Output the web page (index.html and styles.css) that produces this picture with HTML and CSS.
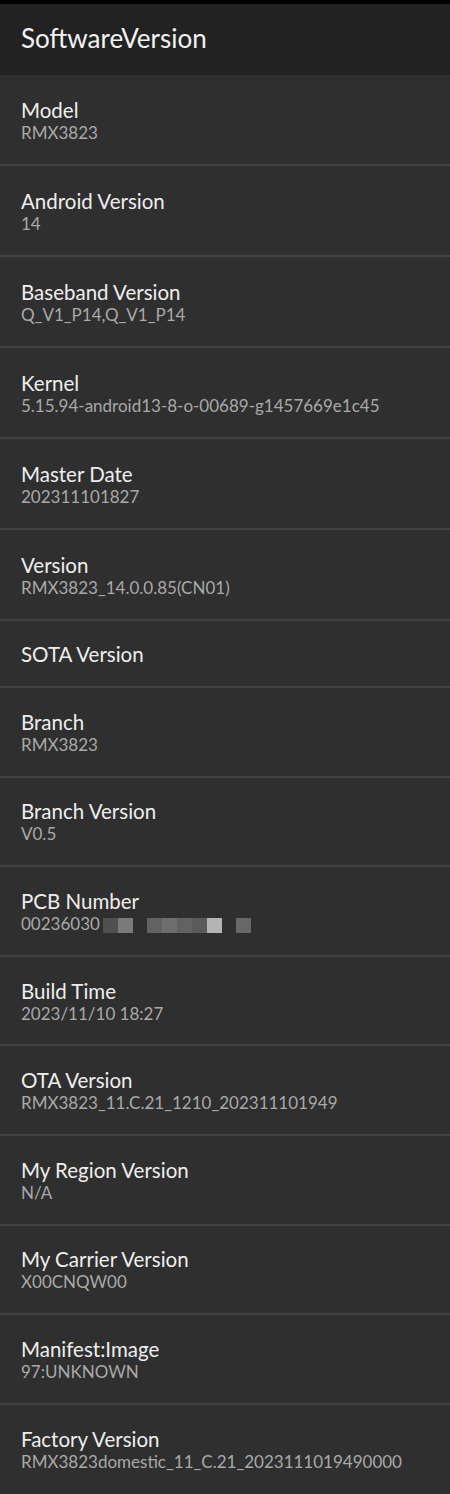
FILE: index.html
```html
<!DOCTYPE html>
<html>
<head>
<meta charset="utf-8">
<link rel="stylesheet" href="styles.css">
</head>
<body>
<div class="status"></div>
<header class="appbar"><h1 class="title">SoftwareVersion</h1></header>
<main class="list">
  <div class="row tall"><div class="label">Model</div><div class="value">RMX3823</div></div>
  <div class="row tall"><div class="label">Android Version</div><div class="value">14</div></div>
  <div class="row tall"><div class="label">Baseband Version</div><div class="value">Q_V1_P14,Q_V1_P14</div></div>
  <div class="row tall"><div class="label">Kernel</div><div class="value">5.15.94-android13-8-o-00689-g1457669e1c45</div></div>
  <div class="row tall"><div class="label">Master Date</div><div class="value">202311101827</div></div>
  <div class="row tall"><div class="label">Version</div><div class="value">RMX3823_14.0.0.85(CN01)</div></div>
  <div class="row single"><div class="label">SOTA Version</div></div>
  <div class="row"><div class="label">Branch</div><div class="value">RMX3823</div></div>
  <div class="row"><div class="label">Branch Version</div><div class="value">V0.5</div></div>
  <div class="row"><div class="label">PCB Number</div><div class="value masked">00236030<span class="mosaic"><i class="px p1"></i><i class="px p2"></i><i class="gap"></i><i class="px p3"></i><i class="px p4"></i><i class="px p3"></i><i class="px p5"></i><i class="px p6"></i><i class="gap"></i><i class="px p7"></i></span></div></div>
  <div class="row"><div class="label">Build Time</div><div class="value">2023/11/10 18:27</div></div>
  <div class="row"><div class="label">OTA Version</div><div class="value">RMX3823_11.C.21_1210_202311101949</div></div>
  <div class="row"><div class="label">My Region Version</div><div class="value">N/A</div></div>
  <div class="row"><div class="label">My Carrier Version</div><div class="value">X00CNQW00</div></div>
  <div class="row"><div class="label">Manifest:Image</div><div class="value">97:UNKNOWN</div></div>
  <div class="row last"><div class="label">Factory Version</div><div class="value">RMX3823domestic_11_C.21_2023111019490000</div></div>
</main>
</body>
</html>
```

FILE: styles.css
```css
html, body {
  margin: 0;
  padding: 0;
}
body {
  background: #2f2f2f;
  font-family: Lato, "Open Sans", sans-serif;
  color: #efefef;
  width: 450px;
  overflow: hidden;
}
.status {
  height: 4px;
  background: #000;
}
.appbar {
  height: 71px;
  background: #222222;
  display: flex;
  align-items: center;
  padding-left: 21px;
  box-sizing: border-box;
}
.title {
  margin: 0;
  font-weight: 400;
  font-size: 26px;
  line-height: 32px;
  color: #f2f2f2;
  padding-bottom: 4px;
}
.list {
  display: flex;
  flex-direction: column;
}
.row {
  height: 87.6px;
  border-bottom: 2px solid #414141;
  display: flex;
  flex-direction: column;
  justify-content: center;
  padding-left: 21px;
}
.row.tall { height: 89px; }
.row.single { height: 65px; }
.row.last { border-bottom: none; }
.label {
  font-size: 20.5px;
  line-height: 26px;
  color: #eeeeee;
}
.value {
  font-size: 17px;
  line-height: 20px;
  color: #a9a9a9;
}
.masked {
  position: relative;
}
.mosaic {
  position: absolute;
  left: 82px;
  top: 4px;
  display: flex;
}
.mosaic i { display: block; height: 15px; }
.mosaic .px { width: 15px; }
.mosaic .gap { width: 14px; }
.p1 { background: #505050; }
.p2 { background: #7a7a7a; }
.p3 { background: #626262; }
.p4 { background: #6e6e6e; }
.p5 { background: #5a5a5a; }
.p6 { background: #b4b4b4; }
.p7 { background: #686868; }
```
